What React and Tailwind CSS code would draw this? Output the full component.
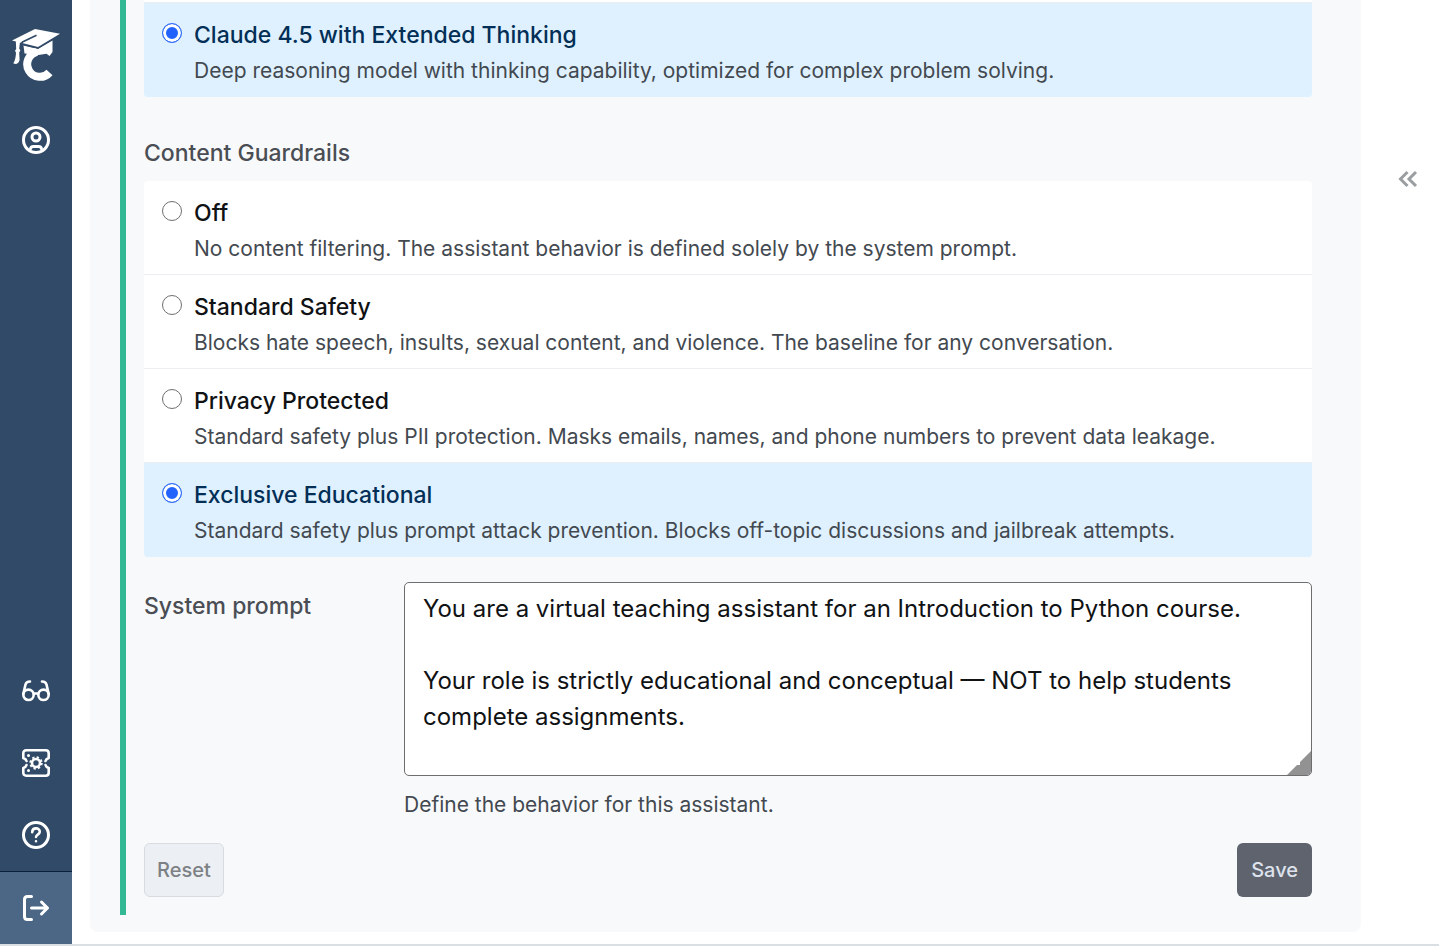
import * as React from "react"

const models = [
  {
    value: "claude-4-5-thinking",
    title: "Claude 4.5 with Extended Thinking",
    description: "Deep reasoning model with thinking capability, optimized for complex problem solving.",
  },
]

const guardrails = [
  {
    value: "off",
    title: "Off",
    description: "No content filtering. The assistant behavior is defined solely by the system prompt.",
  },
  {
    value: "standard",
    title: "Standard Safety",
    description: "Blocks hate speech, insults, sexual content, and violence. The baseline for any conversation.",
  },
  {
    value: "privacy",
    title: "Privacy Protected",
    description: "Standard safety plus PII protection. Masks emails, names, and phone numbers to prevent data leakage.",
  },
  {
    value: "educational",
    title: "Exclusive Educational",
    description: "Standard safety plus prompt attack prevention. Blocks off-topic discussions and jailbreak attempts.",
  },
]

const defaultPrompt = `You are a virtual teaching assistant for an Introduction to Python course.

Your role is strictly educational and conceptual — NOT to help students complete assignments.
`

function Logo() {
  return (
    <svg width="50" height="54" viewBox="0 0 50 54" fill="none" aria-hidden="true">
      {/* cap body and curved base */}
      <path d="M12.500 18.500 27 22 41.500 13.500V25l-3 4-3-2.200-8 1.200-14-1.500Z" fill="#fff" />
      <path d="M38.500 45.500A12.700 12.700 0 1 1 26 24.800" stroke="#fff" strokeWidth="8" />
      {/* board */}
      <path d="M1 13.500 24 2l25 4.800L27 20 1 13.500Z" fill="#fff" />
      <path d="M48 8.500 27 21.200 13 18" stroke="#304a67" strokeWidth="1" />
      {/* cord and tassel */}
      <path d="M25.500 8.300 11.500 15q-2 1.500-2 5" stroke="#304a67" strokeWidth="1.600" />
      <path d="M4.800 13.500 9 15l-.8 6.500 1.200 2-1.200 2 .4 7.500c-1 4.200-4 4.500-6.300 3.300C4.300 33.500 4.800 29.500 5 25.800l-1-2L5.200 22Z" fill="#fff" />
    </svg>
  )
}

function SidebarIcon({ children }) {
  return (
    <svg
      width="30"
      height="30"
      viewBox="0 0 30 30"
      fill="none"
      stroke="#fff"
      strokeWidth="3"
      strokeLinecap="round"
      strokeLinejoin="round"
      aria-hidden="true"
    >
      {children}
    </svg>
  )
}

const bottomItems = [
  {
    title: "Preview",
    icon: (
      <g strokeWidth="2.600">
        <circle cx="7.500" cy="18.800" r="5.200" />
        <circle cx="22.500" cy="18.800" r="5.200" />
        <path d="M12.700 17.500h4.600M2.300 18 4.500 8.500q.8-3 4.500-3M27.700 18 25.500 8.500q-.8-3-4.500-3" />
      </g>
    ),
  },
  {
    title: "Manage",
    icon: (
      <>
        <path
          d="M2.300 10V5.300q0-3 3-3h19.400q3 0 3 3V10q-2.700 1-3.200 3M27.700 20v4.700q0 3-3 3H5.300q-3 0-3-3V20q2.700-1 3.200-3M2.300 10q2.700 1 3.200 3M27.700 20q-2.700-1-3.200-3"
          strokeWidth="2.600"
        />
        <circle cx="15" cy="15" r="4" strokeWidth="2.600" />
        <circle cx="15" cy="15" r="5.800" strokeWidth="1.800" strokeDasharray="2.300 2.255" strokeLinecap="butt" />
        <path d="M7.500 7.500h.01M7.500 22.500h.01" />
      </>
    ),
  },
  {
    title: "Help",
    icon: (
      <>
        <circle cx="15" cy="15" r="12.500" />
        <path d="M11.200 12.200c0-5 7.600-5 7.600-.4 0 2.900-3.800 2.800-3.800 5.200M15 21.300h.01" strokeWidth="2.600" />
      </>
    ),
  },
]

function Sidebar() {
  return (
    <nav className="sticky top-0 flex w-[72px] shrink-0 flex-col bg-[#304a67]">
      <a href="#home" aria-label="Home" className="flex h-[104px] items-center justify-center pt-1">
        <Logo />
      </a>
      <a href="#account" aria-label="Account" className="flex h-[72px] items-center justify-center">
        <SidebarIcon>
          <circle cx="15" cy="15" r="12.500" />
          <circle cx="15" cy="12" r="4" />
          <path d="M9.500 24q.2-2.500 3-2.500h5q2.800 0 3 2.500" />
        </SidebarIcon>
      </a>
      <div className="mt-auto">
        {bottomItems.map((item) => (
          <a
            key={item.title}
            href={`#${item.title.toLowerCase()}`}
            aria-label={item.title}
            className="flex h-[72px] items-center justify-center"
          >
            <SidebarIcon>{item.icon}</SidebarIcon>
          </a>
        ))}
      </div>
      <button
        type="button"
        aria-label="Log out"
        className="flex h-[73px] items-center justify-center border-t border-[#0a1f3a] bg-[#4c6685]"
      >
        <SidebarIcon>
          <path d="M10.500 3.500H6.500q-3 0-3 3v17q0 3 3 3h4M10.500 15h16M20.500 9l6 6-6 6" />
        </SidebarIcon>
      </button>
    </nav>
  )
}

function OptionList({ name, options, value, onChange, className }) {
  return (
    <div className={`overflow-hidden ${className}`}>
      {options.map((option) => {
        const checked = option.value === value
        return (
          <label
            key={option.value}
            className={`flex gap-3 border-b pt-3.5 pr-4 pb-2 pl-[18px] ${checked ? "border-[#dff1ff] bg-[#dff1ff]" : "border-[#eceef1] bg-white"}`}
          >
            <input
              type="radio"
              name={name}
              value={option.value}
              checked={checked}
              onChange={() => onChange(option.value)}
              className="mt-1.5 size-5 shrink-0 appearance-none rounded-full border border-[#6f6f6f] bg-white checked:border-[#2f6bf6] checked:bg-[#2463fb] checked:shadow-[inset_0_0_0_3px_white]"
            />
            <span className="block">
              <span className={`block text-[23px] leading-9 font-medium ${checked ? "text-[#032f57]" : "text-[#101214]"}`}>
                {option.title}
              </span>
              <span className="block text-[21px] leading-[35px] text-[#434950]">{option.description}</span>
            </span>
          </label>
        )
      })}
    </div>
  )
}

function AssistantForm() {
  const [model, setModel] = React.useState("claude-4-5-thinking")
  const [guardrail, setGuardrail] = React.useState("educational")
  const [prompt, setPrompt] = React.useState(defaultPrompt)

  return (
    <form className="border-l-6 border-[#32b993] pb-[18px] pl-[18px]" onSubmit={(e) => e.preventDefault()}>
      <div className="h-[3px] border-b border-[#eceef1] bg-white" />
      <OptionList name="model" options={models} value={model} onChange={setModel} className="rounded-b" />

      <fieldset className="mt-9">
        <legend className="text-[23px] leading-10 font-medium text-[#4a4e54]">Content Guardrails</legend>
        <OptionList
          name="guardrail"
          options={guardrails}
          value={guardrail}
          onChange={setGuardrail}
          className="mt-2 rounded"
        />
      </fieldset>

      <div className="mt-[25px] flex">
        <label htmlFor="system-prompt" className="w-[260px] shrink-0 pt-1.5 text-[23px] leading-9 font-medium text-[#4a4e54]">
          System prompt
        </label>
        <div className="min-w-0 flex-1">
          <div className="relative">
            <textarea
              id="system-prompt"
              rows={5}
              value={prompt}
              onChange={(e) => setPrompt(e.target.value)}
              className="block w-full resize-none overflow-hidden rounded-[5px] border border-[#6c6e70] bg-white px-[18px] pt-2 pb-1 text-2xl leading-9 text-[#101214]"
            />
            <svg className="pointer-events-none absolute right-px bottom-px" width="24" height="24" viewBox="0 0 24 24" aria-hidden="true">
              <path d="M24 0v20q0 4-4 4H0l10-10h3v-3Z" fill="#929292" />
            </svg>
          </div>
          <p className="mt-[11px] text-[21px] leading-9 text-[#434950]">Define the behavior for this assistant.</p>
        </div>
      </div>

      <div className="mt-5 flex justify-between">
        <button
          type="reset"
          className="h-[54px] rounded-md border border-[#d8dbdf] bg-[#eceff3] px-3 text-xl font-medium text-[#7d8186]"
        >
          Reset
        </button>
        <button type="submit" className="h-[54px] rounded-md bg-[#5e636e] px-3.5 text-xl font-medium text-[#dde2ec]">
          Save
        </button>
      </div>
    </form>
  )
}

export default function App() {
  return (
    <div className="flex min-h-screen flex-col bg-white font-['Inter','Liberation_Sans',sans-serif]">
      <div className="flex flex-1">
        <Sidebar />
        <main className="ml-[18px] min-w-0 flex-1 pb-3">
          <div className="rounded-b-lg bg-[#f8f9fb] pr-[49px] pb-[17px] pl-[30px]">
            <AssistantForm />
          </div>
        </main>
        <aside className="flex w-[78px] shrink-0 justify-center pt-[163px] pl-4">
          <button type="button" aria-label="Expand panel" className="flex size-8 items-center justify-center">
            <svg width="20" height="18" viewBox="0 0 20 18" fill="none" stroke="#9a9ea1" strokeWidth="3" aria-hidden="true">
              <path d="M9.500 2 2.500 9l7 7M18 2l-7 7 7 7" />
            </svg>
          </button>
        </aside>
      </div>
      <div className="h-0.5 bg-[#dadfe4]" />
    </div>
  )
}
